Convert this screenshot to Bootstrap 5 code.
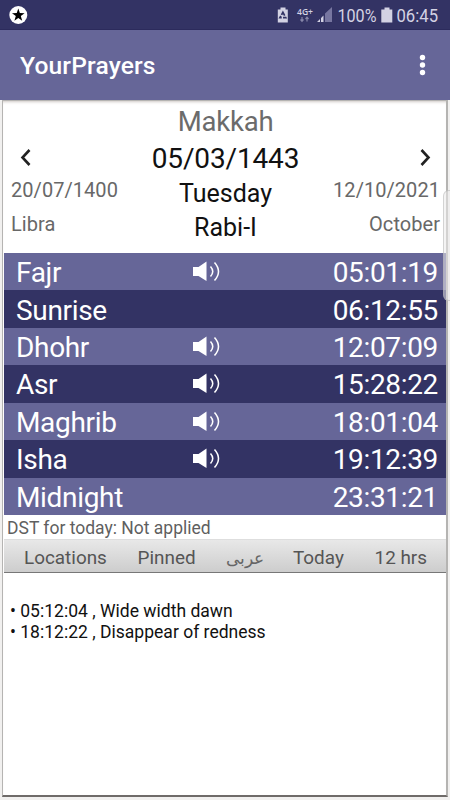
<!DOCTYPE html>
<html lang="en">
<head>
<meta charset="utf-8">
<meta name="viewport" content="width=device-width, initial-scale=1">
<title>YourPrayers</title>
<link href="https://cdn.jsdelivr.net/npm/bootstrap@5.3.0/dist/css/bootstrap.min.css" rel="stylesheet">
<style>
body { font-family: Roboto, "Noto Sans", sans-serif; height: 800px; background: #f1f0ef; color: #111; }
.status-bar { height: 30px; background: #333364; border-bottom: 1px solid #2c2b5c; }
.app-bar { height: 70px; background: #666698; }
.app-title { font-size: 24.6px; font-weight: 500; line-height: 30px; letter-spacing: .15px; padding-top: 2px; }
.sheet { height: 697px; margin: 0 2px 0 2px; background: #fff; border: solid #b5b4b2; border-width: 1px 2px 0 1px; border-bottom: 2px solid #6f6b69; box-shadow: inset 0 3px 3px -2px #cfcac6; }
.date-head { height: 152px; line-height: 1; padding: 0 6px 0 8px; }
.side { width: 120px; padding-top: 44px; }
.side svg { display: block; }
.side-text { font-size: 20px; letter-spacing: .05px; line-height: 34px; color: #686868; white-space: nowrap; padding-top: 1px; margin-bottom: -1px; }
.city { font-size: 27.5px; letter-spacing: -.2px; line-height: 36px; color: #6b6b6b; padding-top: 3px; margin-bottom: 1px; }
.hijri { font-size: 28px; letter-spacing: -.15px; line-height: 36px; }
.weekday { font-size: 25px; line-height: 34px; }
.times { width: 442px; height: 262px; margin-left: 1px; }
.time-row { height: 37.43px; font-size: 28px; letter-spacing: -.33px; line-height: 37px; background: #666698; color: #fff; padding: 1px 8px 0 12px; }
.time-row:nth-child(even) { background: #333364; }
.time-row > span { padding-top: 1px; }
.time-name { width: 177px; }
.dst { font-size: 17.5px; line-height: 26px; height: 24px; color: #5f5f5f; padding-left: 4px; }
.tool-strip { width: 442px; margin-left: 1px; height: 34px; font-size: 18.9px; line-height: 36px; color: #555; background: linear-gradient(#e8e8e8, #cdcdcd); border-bottom: 1px solid #777; border-top: 1px solid #dedede; padding: 0 19px 0 20px; }
.arabic { font-size: 17px; width: 36px; color: #666; white-space: nowrap; }
.notes { font-size: 17.55px; line-height: 20.5px; padding: 28px 0 0 7px; }
.scroll-thumb { right: 0; top: 190px; width: 7px; height: 111px; border: 1px solid rgba(170,170,170,.45); border-right: 0; border-radius: 6px 0 0 6px; background: rgba(235,235,235,.55); }
</style>
<script src="https://cdn.jsdelivr.net/npm/bootstrap@5.3.0/dist/js/bootstrap.bundle.min.js"></script>
</head>
<body class="m-0 position-relative overflow-hidden">
<svg class="d-none">
  <symbol id="speaker" viewBox="0 0 28 24"><path d="M0 7h5.500L13.500 1.500v19.500L5.500 16H0z" fill="#fff"/><path d="M17.500 6.500q4.500 5 0 10M21.500 2.500q8 9 0 18" fill="none" stroke="#fff" stroke-width="1.500"/></symbol>
</svg>
<header>
  <div class="status-bar">
    <svg class="d-block" width="450" height="29" viewBox="0 0 450 29" font-family="Roboto, sans-serif" fill="#d3d2e3">
      <circle cx="18.300" cy="15" r="9" fill="#fff"/>
      <path d="M18.300 8.600l1.550 4.500 4.750.1-3.800 2.850 1.400 4.600-3.900-2.750-3.900 2.750 1.400-4.600-3.800-2.850 4.750-.1z" fill="#000"/>
      <path d="M280.500 7.500h5v2h2.300v13h-10v-13h2.700z"/>
      <path d="M282.900 12.300l2.900 5.400h-5.900z" fill="none" stroke="#333364" stroke-width="1.700" stroke-dasharray="3.800 1.300"/>
      <text x="297" y="14.500" font-family="Open Sans, sans-serif" font-size="9" font-weight="600" textLength="16" lengthAdjust="spacingAndGlyphs">4G+</text>
      <path d="M302 17v4m-1.500-1.500l1.500 1.800 1.500-1.800M307 21.500v-4m-1.500 1.500l1.500-1.800 1.500 1.800" fill="none" stroke="#8685a8" stroke-width="1.200"/>
      <path d="M317 22l3-3v3zM321 22v-4l2.500-2.500V22z"/><path d="M325 22v-8.500l7-6.500v15z" fill="#7776a0"/>
      <text x="337.500" y="22" font-size="18.500" textLength="39" lengthAdjust="spacingAndGlyphs">100%</text>
      <path d="M384.500 7.500h5v2h2.800v13h-11v-13h3.200z"/>
      <text x="396.500" y="22" font-size="18.500" textLength="41.500" lengthAdjust="spacingAndGlyphs">06:45</text>
    </svg>
  </div>
  <div class="app-bar d-flex align-items-center justify-content-between">
    <div class="app-title text-white ps-3 ms-1">YourPrayers</div>
    <svg width="56" height="30" viewBox="0 0 56 30" fill="#fff"><circle cx="28.500" cy="7.500" r="2.700"/><circle cx="28.500" cy="15" r="2.700"/><circle cx="28.500" cy="22.500" r="2.700"/></svg>
  </div>
</header>
<main class="sheet">
  <section class="date-head d-flex justify-content-between">
    <div class="side">
      <svg width="30" height="27" viewBox="0 0 30 27"><path d="M18.500 5l-7 7.500 7 7.500" fill="none" stroke="#222" stroke-width="2.600"/></svg>
      <div class="side-text">20/07/1400</div>
      <div class="side-text">Libra</div>
    </div>
    <div class="text-center">
      <div class="city">Makkah</div>
      <div class="hijri">05/03/1443</div>
      <div class="weekday">Tuesday</div>
      <div class="weekday">Rabi-I</div>
    </div>
    <div class="side text-end">
      <svg class="ms-auto" width="30" height="27" viewBox="0 0 30 27"><path d="M11.500 5l7 7.500-7 7.500" fill="none" stroke="#222" stroke-width="2.600"/></svg>
      <div class="side-text">12/10/2021</div>
      <div class="side-text">October</div>
    </div>
  </section>
  <section class="times">
    <div class="time-row d-flex align-items-center"><span class="time-name">Fajr</span><svg width="28" height="24"><use href="#speaker"/></svg><span class="ms-auto">05:01:19</span></div>
    <div class="time-row d-flex align-items-center"><span class="time-name">Sunrise</span><span class="ms-auto">06:12:55</span></div>
    <div class="time-row d-flex align-items-center"><span class="time-name">Dhohr</span><svg width="28" height="24"><use href="#speaker"/></svg><span class="ms-auto">12:07:09</span></div>
    <div class="time-row d-flex align-items-center"><span class="time-name">Asr</span><svg width="28" height="24"><use href="#speaker"/></svg><span class="ms-auto">15:28:22</span></div>
    <div class="time-row d-flex align-items-center"><span class="time-name">Maghrib</span><svg width="28" height="24"><use href="#speaker"/></svg><span class="ms-auto">18:01:04</span></div>
    <div class="time-row d-flex align-items-center"><span class="time-name">Isha</span><svg width="28" height="24"><use href="#speaker"/></svg><span class="ms-auto">19:12:39</span></div>
    <div class="time-row d-flex align-items-center"><span class="time-name">Midnight</span><span class="ms-auto">23:31:21</span></div>
  </section>
  <div class="dst">DST for today: Not applied</div>
  <nav class="tool-strip d-flex justify-content-between">
    <span>Locations</span><span>Pinned</span><span class="arabic" lang="fa">عربی</span><span>Today</span><span>12 hrs</span>
  </nav>
  <section class="notes">
    <div>• 05:12:04 , Wide width dawn</div>
    <div>• 18:12:22 , Disappear of redness</div>
  </section>
</main>
<div class="scroll-thumb position-absolute"></div>
</body>
</html>
